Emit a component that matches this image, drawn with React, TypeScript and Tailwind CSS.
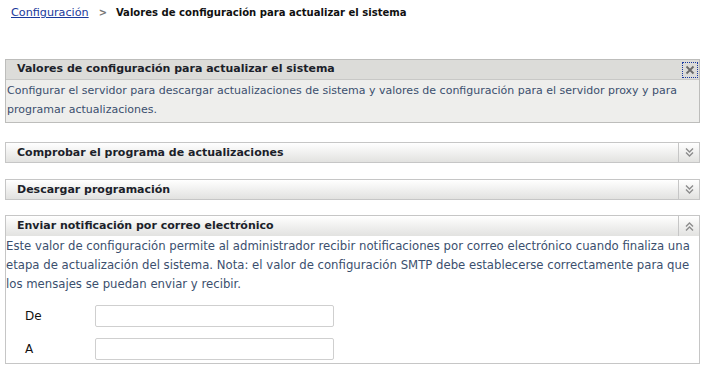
import React from "react";

const font = { fontFamily: '"DejaVu Sans", Verdana, sans-serif' };
const cond = { fontFamily: '"DejaVu Sans Condensed", "DejaVu Sans", sans-serif' };

function ChevronDown() {
  return (
    <svg width="11" height="11" viewBox="0 0 11 11" fill="none" stroke="#8c8c8c" strokeWidth="1.4">
      <path d="M2 1.5 L5.5 5 L9 1.5" />
      <path d="M2 5.5 L5.5 9 L9 5.5" />
    </svg>
  );
}
function ChevronUp() {
  return (
    <svg width="11" height="11" viewBox="0 0 11 11" fill="none" stroke="#8c8c8c" strokeWidth="1.4">
      <path d="M2 5.5 L5.5 2 L9 5.5" />
      <path d="M2 9.5 L5.5 6 L9 9.5" />
    </svg>
  );
}

function CollapsedPanel({ title }: { title: string }) {
  return (
    <div className="mx-[5px] border border-[#c6c6c6] h-[21px] flex bg-gradient-to-b from-white to-[#e2e2e0]">
      <div className="flex-1 pl-[11px] text-[11px] font-bold text-[#1c1f2a] leading-[19px]">{title}</div>
      <div className="w-[21px] border-l border-[#c6c6c6] flex items-center justify-center">
        <ChevronDown />
      </div>
    </div>
  );
}

export default function App() {
  return (
    <div className="w-[705px] h-[368px] bg-white overflow-hidden" style={font}>
      <div className="flex items-center h-[27px] pl-[11px]">
        <a className="text-[11.2px] text-[#1a3a9c] underline">Configuración</a>
        <span className="ml-[10px] mr-[9px] text-[11px] text-[#777] font-bold" style={cond}>&gt;</span>
        <span className="text-[11.2px] font-bold text-[#111]" style={cond}>
          Valores de configuración para actualizar el sistema
        </span>
      </div>
      <div className="h-[32px]" />
      <div className="mx-[5px] border border-[#bdbdbb] bg-[#eeeeec]">
        <div className="h-[20px] flex items-center bg-[#dcdcd9] border-b border-[#c8c8c6]">
          <div className="flex-1 pl-[11px] text-[11px] font-bold text-[#1c1f2a]">
            Valores de configuración para actualizar el sistema
          </div>
          <div className="w-[16px] h-[16px] mr-[1px] border border-dotted border-[#1a3aa0] flex items-center justify-center">
            <svg width="10" height="10" viewBox="0 0 10 10" stroke="#6a6a6a" strokeWidth="1.8">
              <path d="M1.5 1.5 L8.5 8.5 M8.5 1.5 L1.5 8.5" />
            </svg>
          </div>
        </div>
        <div className="px-[1px] pt-[1px] pb-[3px] text-[11px] leading-[19px] text-[#3b4f6e]">
          Configurar el servidor para descargar actualizaciones de sistema y valores de configuración para el servidor proxy y para programar actualizaciones.
        </div>
      </div>
      <div className="h-[19px]" />
      <CollapsedPanel title="Comprobar el programa de actualizaciones" />
      <div className="h-[16px]" />
      <CollapsedPanel title="Descargar programación" />
      <div className="h-[15px]" />
      <div className="mx-[5px] border border-[#c6c6c6] h-[149px]">
        <div className="h-[20px] flex bg-gradient-to-b from-white to-[#e2e2e0]">
          <div className="flex-1 pl-[11px] text-[11px] font-bold text-[#1c1f2a] leading-[19px]">
            Enviar notificación por correo electrónico
          </div>
          <div className="w-[21px] border-l border-[#c6c6c6] flex items-center justify-center">
            <ChevronUp />
          </div>
        </div>
        <div className="pt-[1px] text-[11.7px] leading-[19px] text-[#3b4f6e]">
          Este valor de configuración permite al administrador recibir notificaciones por correo electrónico cuando finaliza una etapa de actualización del sistema. Nota: el valor de configuración SMTP debe establecerse correctamente para que los mensajes se puedan enviar y recibir.
        </div>
        <div className="mt-[11px] grid grid-cols-[70px_239px] gap-y-[11px] pl-[19px] text-[12px] text-[#111]">
          <div className="flex items-center h-[22px]">De</div>
          <input className="h-[22px] border border-[#cfcfcf] rounded-[2px]" />
          <div className="flex items-center h-[22px]">A</div>
          <input className="h-[22px] border border-[#cfcfcf] rounded-[2px]" />
        </div>
      </div>
    </div>
  );
}
